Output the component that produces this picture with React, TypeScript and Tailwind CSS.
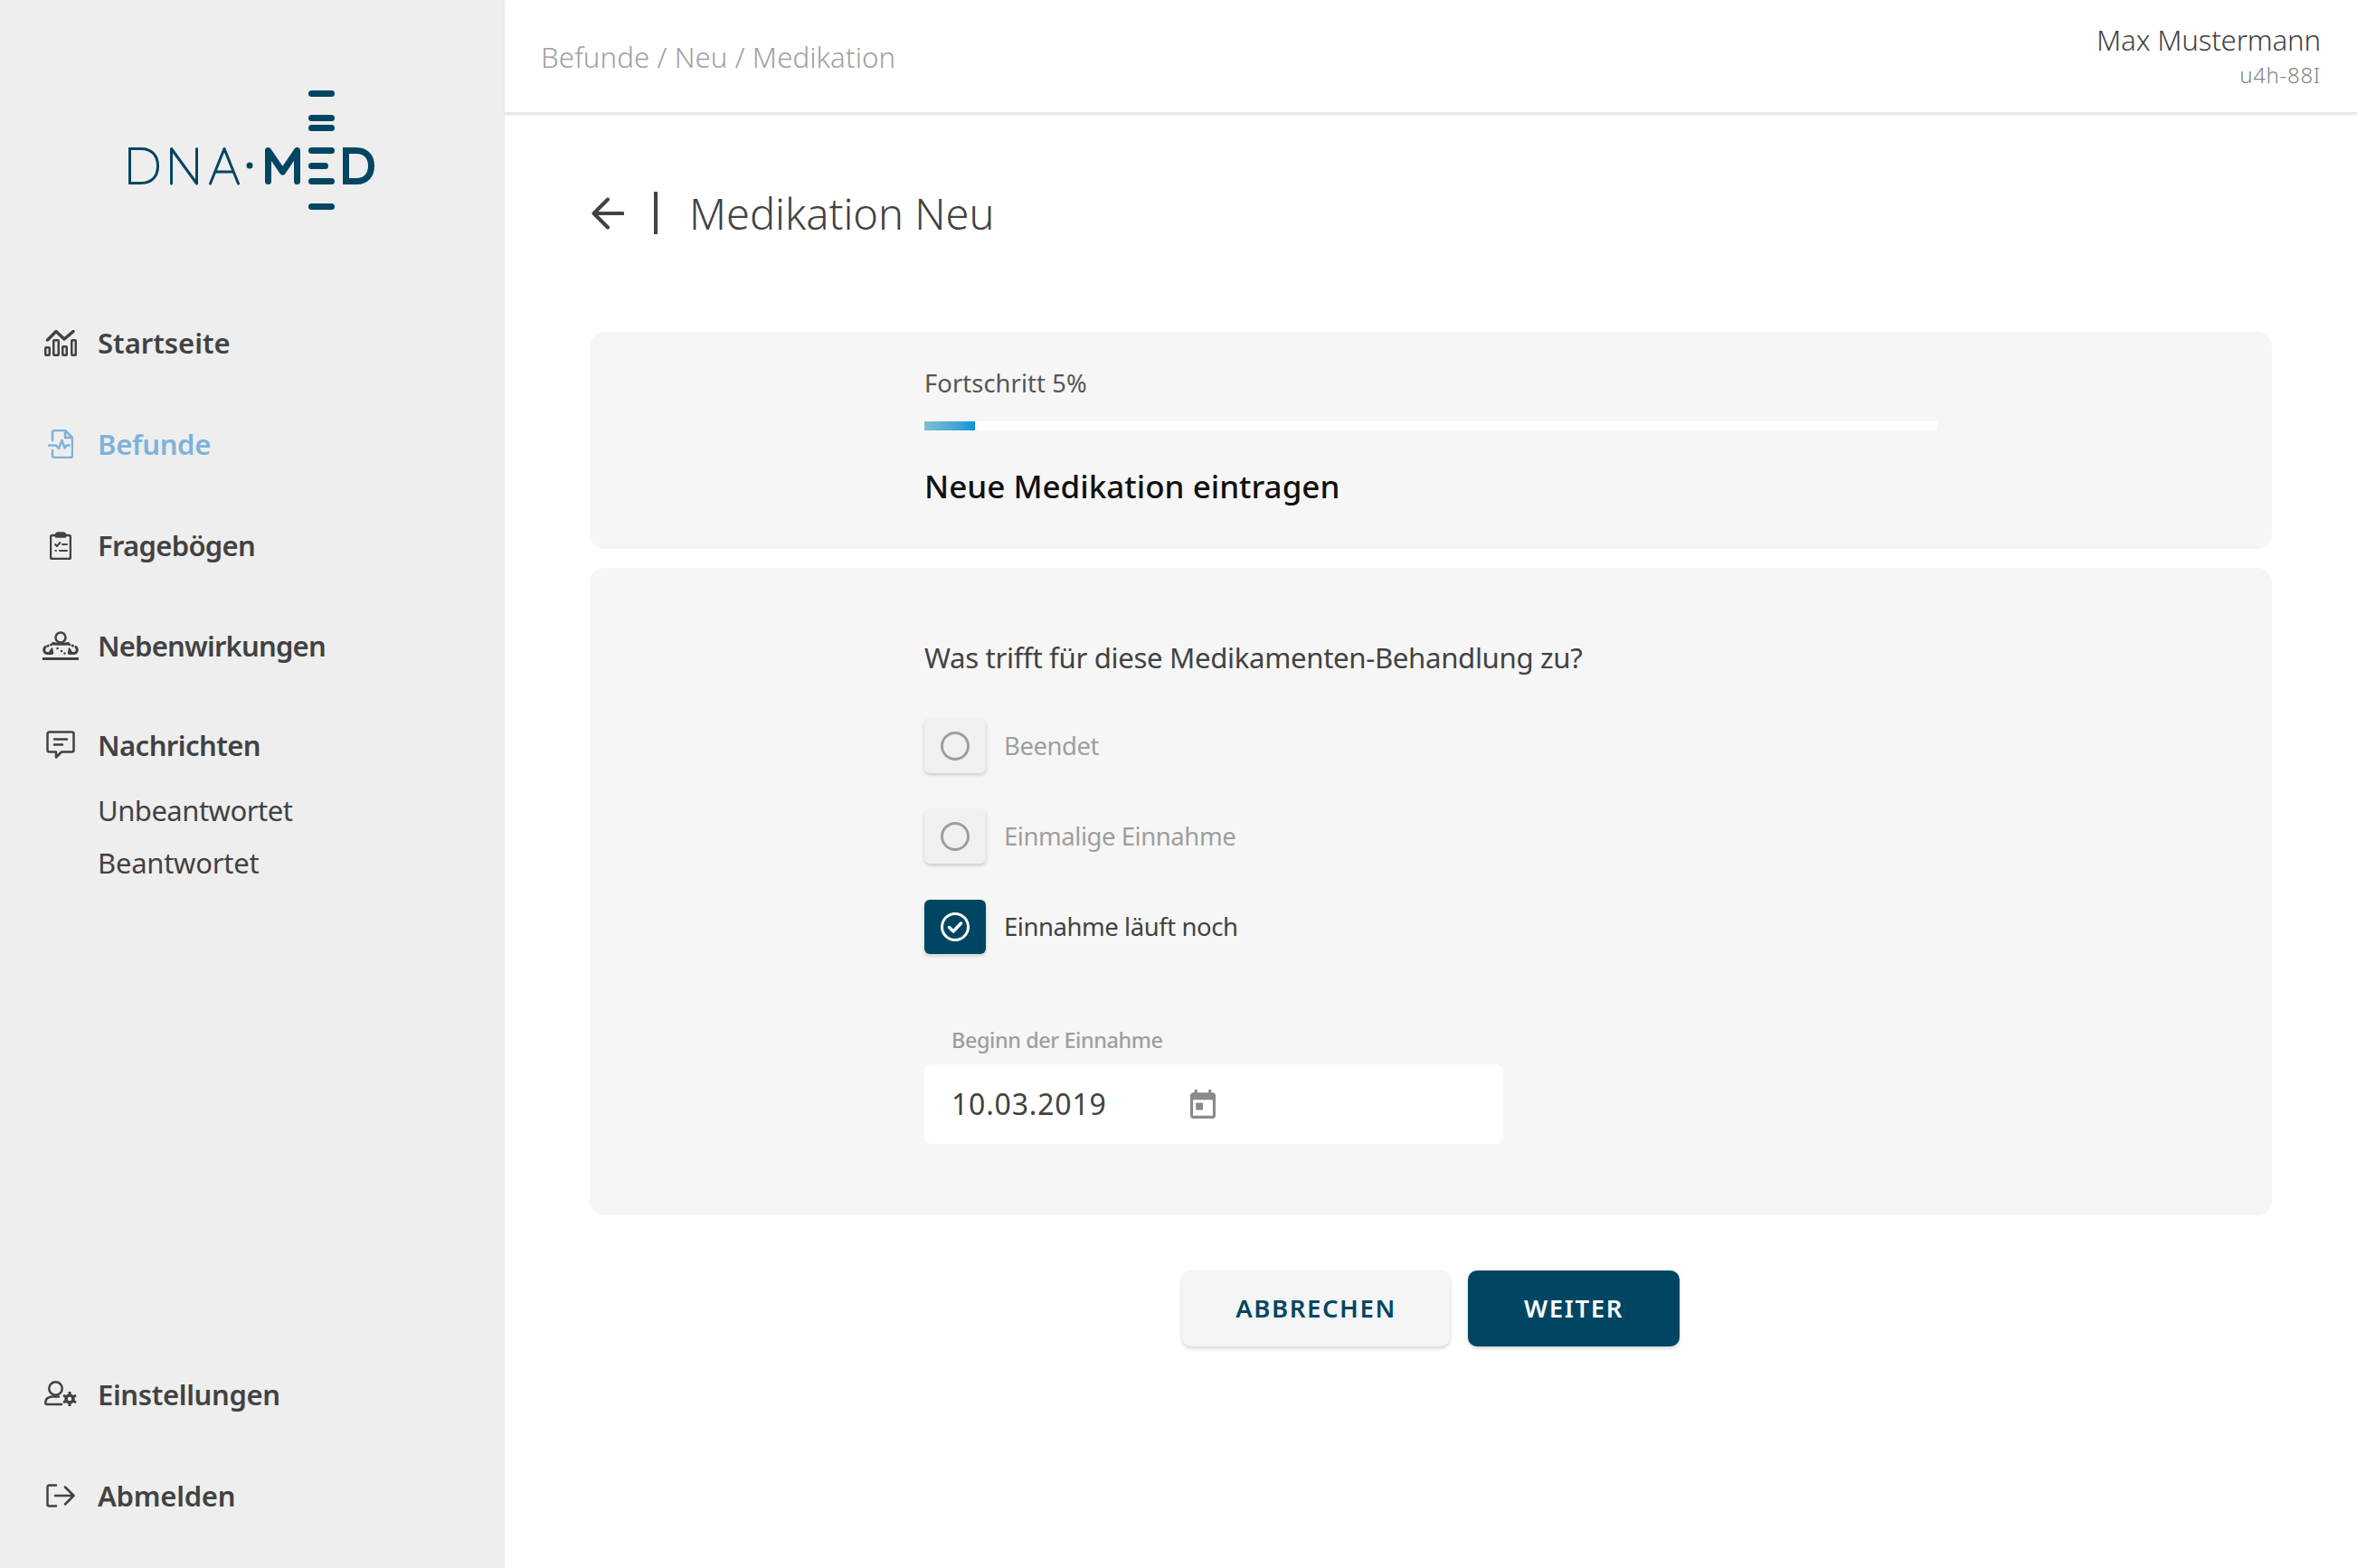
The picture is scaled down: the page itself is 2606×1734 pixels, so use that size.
import React from "react";

const C = "#004662";

function Logo() {
  return (
    <svg width="272" height="132" viewBox="0 0 272 132" fill="none" stroke={C} strokeLinecap="round" strokeLinejoin="round">
      <path strokeWidth="3" strokeLinecap="butt" strokeLinejoin="miter" d="M1.5 64.5H14C26 64.5 32.5 72 32.5 83.5S26 102.5 14 102.5H1.5Z" />
      <path strokeWidth="3" d="M47.5 103V64.5L75.5 103V64.5" />
      <path strokeWidth="3" d="M90.5 103L106 64.5L121.5 103M96 90H116" />
      <circle cx="134" cy="83" r="3.5" fill={C} stroke="none" />
      <path strokeWidth="7" d="M154.5 100.5V66.5L170.5 90L186.5 66.5V100.5" />
      <path strokeWidth="7" d="M202.5 3.5H224.5M202.5 30.5H224.5M202.5 41.5H224.5M202.5 66.5H224.5M202.5 83.5H217.5M202.5 100.5H224.5M202.5 128.5H224.5" />
      <path strokeWidth="7" strokeLinecap="butt" strokeLinejoin="miter" d="M240.5 66.5H252C263 66.5 268.5 74 268.5 83.5S263 100.5 252 100.5H240.5Z" />
    </svg>
  );
}

const IconHome = () => (
  <svg width="36" height="30" viewBox="0 0 36 30" fill="none" stroke="currentColor" strokeWidth="2.5" strokeLinecap="round" strokeLinejoin="round">
    <path strokeWidth="3.5" d="M3.5 12L13 2.5L22 11L32 2.5" />
    <rect x="1.25" y="20.25" width="4.5" height="8.5" rx="0.8" />
    <rect x="10.25" y="12.25" width="5.5" height="16.5" rx="0.8" />
    <rect x="20.25" y="19.25" width="4.5" height="9.5" rx="0.8" />
    <rect x="30.25" y="12.25" width="4.5" height="16.5" rx="0.8" />
  </svg>
);

const IconDoc = () => (
  <svg width="28" height="32" viewBox="0 0 28 32" fill="none" stroke="currentColor" strokeWidth="2.5" strokeLinecap="round" strokeLinejoin="round">
    <path d="M5 12V3a2 2 0 0 1 2-2h12l8 8v20a2 2 0 0 1-2 2H7a2 2 0 0 1-2-2v-6" />
    <path d="M19 2v7h7" />
    <path d="M1 17.5h8l3 3.5 3.5-9 3 8.5 2-3h3" />
  </svg>
);

const IconClip = () => (
  <svg width="24" height="32" viewBox="0 0 24 32" fill="none" stroke="currentColor" strokeWidth="2.5" strokeLinecap="round" strokeLinejoin="round">
    <path d="M7 5H3a2 2 0 0 0-2 1.8V29a2 2 0 0 0 2 2h18a2 2 0 0 0 2-2V6.8A2 2 0 0 0 21 5h-4" />
    <path d="M7 6.5V4.8A2.5 2.5 0 0 1 9.5 2.5h5A2.5 2.5 0 0 1 17 4.8v1.7z" fill="currentColor" />
    <path strokeWidth="2" d="M6 15l2 2 3.5-4M14 15h5M6.5 22h.5M11 22h8" />
  </svg>
);

const IconSide = () => (
  <svg width="40" height="32" viewBox="0 0 40 32" fill="none" stroke="currentColor" strokeWidth="2.5" strokeLinecap="round" strokeLinejoin="round">
    <circle cx="20" cy="7" r="5.5" />
    <path strokeWidth="3" d="M11.5 13.5C14 14.500 26 14.500 28.500 13.500" />
    <path strokeDasharray="1 3" d="M5.500 16.500L11 14.500M29 14.500L34.500 16.500" />
    <path strokeWidth="3" d="M3 17.500C.8 20 1.500 24 5 24.500H10M37 17.500C39.200 20 38.500 24 35 24.500H30" />
    <path d="M10.500 19L7 24.500L11.500 24.500zM29.500 19L33 24.500L28.500 24.500z" fill="currentColor" strokeWidth="1.500" />
    <path d="M16.500 19h.1M24.500 24.500h.1M21 22h.1" />
    <path strokeLinecap="butt" strokeWidth="3" d="M0 30.500H40" />
  </svg>
);

const IconChat = () => (
  <svg width="32" height="32" viewBox="0 0 32 32" fill="none" stroke="currentColor" strokeWidth="2.5" strokeLinecap="round" strokeLinejoin="round">
    <path d="M3.500 1.500h25a2 2 0 0 1 2 2v18a2 2 0 0 1-2 2H17l-6 6v-6H3.500a2 2 0 0 1-2-2v-18a2 2 0 0 1 2-2z" />
    <path d="M9 9.500h14M9 15.500h9" />
  </svg>
);

const IconUserGear = () => (
  <svg width="36" height="30" viewBox="0 0 36 30" fill="none" stroke="currentColor" strokeWidth="2.500" strokeLinecap="round" strokeLinejoin="round">
    <circle cx="12.500" cy="8.500" r="7.250" />
    <path d="M19 26H3c-1 0-1.750-.7-1.750-1.700 0-4 3-6.300 6.500-6.800H16" />
    <circle cx="28" cy="20" r="4" strokeWidth="3.500" />
    <path strokeWidth="3" strokeLinecap="butt" d="M28 12v3M28 25v3M21 16l2.600 1.500M32.400 22.500L35 24M21 24l2.600-1.500M32.400 17.500L35 16" />
  </svg>
);

const IconLogout = () => (
  <svg width="32" height="26" viewBox="0 0 32 26" fill="none" stroke="currentColor" strokeWidth="2.500" strokeLinecap="round" strokeLinejoin="round">
    <path d="M11 1.500H3.500a2 2 0 0 0-2 2v19a2 2 0 0 0 2 2H11" />
    <path d="M10 13H30M21 3.500L30.500 13L21 22.500" />
  </svg>
);

function NavItem({ icon, label, active, h, track }: { icon: React.ReactNode; label: string; active?: boolean; h: string; track: string }) {
  return (
    <a className={`flex items-center ${h} ${active ? "text-[#7db3da]" : "text-[#424242]"}`}>
      <span className="w-[108px] flex justify-center pl-[26px] shrink-0">{icon}</span>
      <span className={`text-[31px] leading-[44px] font-semibold ${track}`}>{label}</span>
    </a>
  );
}

function Option({ label, checked }: { label: string; checked?: boolean }) {
  return (
    <div className="flex items-center gap-[20px]">
      <div className={`w-[68px] h-[60px] rounded-[6px] flex items-center justify-center shadow-[0_2px_4px_rgba(0,0,0,0.18)] ${checked ? "bg-[#004662]" : "bg-[#f0f0f0]"}`}>
        {checked ? (
          <svg width="32" height="32" viewBox="0 0 32 32" fill="none" stroke="#fff" strokeWidth="3" strokeLinecap="round" strokeLinejoin="round">
            <circle cx="16" cy="16" r="14.500" />
            <path strokeWidth="3.500" d="M9.500 16.500l4.500 4.500 8.500-9" />
          </svg>
        ) : (
          <svg width="32" height="32" viewBox="0 0 32 32" fill="none" stroke="#9e9e9e" strokeWidth="3">
            <circle cx="16" cy="16" r="14.500" />
          </svg>
        )}
      </div>
      <span className={`text-[27.5px] leading-[40px] tracking-[-0.45px] ${checked ? "text-[#424242]" : "text-[#9e9e9e]"}`}>{label}</span>
    </div>
  );
}

export default function App() {
  return (
    <div className="flex w-full h-[1734px] bg-white overflow-hidden font-['Noto_Sans',sans-serif]">
      <aside className="w-[558px] shrink-0 bg-[#eeeeee] flex flex-col">
        <div className="pl-[142px] pt-[100px]">
          <Logo />
        </div>
        <nav className="mt-[91px] flex flex-col">
          <NavItem h="h-[112px]" track="tracking-[0px]" icon={<IconHome />} label="Startseite" />
          <NavItem h="h-[112px]" track="tracking-[-0.3px]" icon={<IconDoc />} label="Befunde" active />
          <NavItem h="h-[112px]" track="tracking-[-0.7px]" icon={<IconClip />} label="Fragebögen" />
          <NavItem h="h-[110px]" track="tracking-[-0.8px]" icon={<IconSide />} label="Nebenwirkungen" />
          <NavItem h="h-[110px]" track="tracking-[-0.55px]" icon={<IconChat />} label="Nachrichten" />
          <div className="pl-[108px] text-[31px] leading-[58px] text-[#424242] -mt-[12px]">
            <div className="tracking-[-0.5px]">Unbeantwortet</div>
            <div className="tracking-[-0.25px]">Beantwortet</div>
          </div>
        </nav>
        <div className="mt-auto pb-[24px] flex flex-col">
          <NavItem h="h-[112px]" track="tracking-[-0.35px]" icon={<IconUserGear />} label="Einstellungen" />
          <NavItem h="h-[112px]" track="tracking-[-0.25px]" icon={<IconLogout />} label="Abmelden" />
        </div>
      </aside>

      <div className="flex-1 flex flex-col min-w-0">
        <header className="h-[127px] shrink-0 flex items-center justify-between pl-[40px] pr-[40px] border-b-[3px] border-[#e8e8e8] shadow-[0_1px_3px_rgba(0,0,0,0.06)]">
          <div className="text-[31.2px] leading-[44px] pt-[2px] tracking-[0.1px] font-light text-[#a0a0a0]">Befunde / Neu / Medikation</div>
          <div className="text-right">
            <div className="text-[31.2px] leading-[42px] tracking-[-0.15px] font-light text-[#424242] -mt-[2px]">Max Mustermann</div>
            <div className="text-[24px] leading-[32px] tracking-[0.7px] font-light text-[#848484] mt-[2px]">u4h-88I</div>
          </div>
        </header>

        <main className="px-[94px] pt-[85px] flex flex-col">
          <div className="flex items-center h-[47px]">
            <svg width="36" height="36" viewBox="0 0 36 36" fill="none" stroke="#424242" strokeWidth="4" strokeLinecap="round" strokeLinejoin="round" className="ml-[2px]">
              <path d="M34.500 18H2.500M18 2.500L2.500 18L18 33.500" />
            </svg>
            <div className="w-[4px] h-[47px] bg-[#424242] ml-[33px]" />
            <h1 className="ml-[35px] text-[47px] leading-[56px] font-light text-[#424242]">Medikation Neu</h1>
          </div>

          <section className="mt-[108px] h-[240px] rounded-[16px] bg-[#f6f6f6] pl-[370px] pt-[37px]">
            <div className="text-[27.300px] leading-[40px] tracking-[0.1px] text-[#555555]">Fortschritt 5%</div>
            <div className="mt-[22px] w-[1120px] h-[10px] bg-white">
              <div className="h-full w-[56px] bg-gradient-to-r from-[#7cc0d4] to-[#0094d4]" />
            </div>
            <div className="mt-[40px] text-[35px] leading-[44px] font-medium text-[#111111]">Neue Medikation eintragen</div>
          </section>

          <section className="mt-[21px] h-[716px] rounded-[16px] bg-[#f6f6f6] pl-[370px] pt-[77px]">
            <div className="text-[31.2px] leading-[44px] tracking-[-0.35px] text-[#424242]">Was trifft für diese Medikamenten-Behandlung zu?</div>
            <div className="mt-[46px] flex flex-col gap-[40px]">
              <Option label="Beendet" />
              <Option label="Einmalige Einnahme" />
              <Option label="Einnahme läuft noch" checked />
            </div>
            <div className="mt-[80px] pl-[30px] text-[23.4px] leading-[30px] tracking-[-0.4px] font-medium text-[#9e9e9e]">Beginn der Einnahme</div>
            <div className="mt-[12px] w-[640px] h-[88px] rounded-[8px] bg-white flex items-center pl-[30px]">
              <span className="text-[32px] leading-[44px] tracking-[0.8px] text-[#424242] w-[264px]">10.03.2019</span>
              <svg width="28" height="32" viewBox="3 1 18 20" preserveAspectRatio="none" fill="#8a8a8a">
                <path d="M19 3h-1V1h-2v2H8V1H6v2H5c-1.110 0-1.990.9-1.990 2L3 19c0 1.100.89 2 2 2h14c1.100 0 2-.9 2-2V5c0-1.100-.9-2-2-2zm0 16H5V8h14v11zM7 10h5v5H7z" />
              </svg>
            </div>
          </section>

          <div className="mt-[61px] flex justify-center gap-[20px]">
            <button className="w-[296px] h-[84px] rounded-[10px] bg-[#f5f5f5] text-[#004662] text-[27.5px] pb-[1px] font-semibold tracking-[1.6px] shadow-[0_2px_4px_rgba(0,0,0,0.18)]">ABBRECHEN</button>
            <button className="w-[234px] h-[84px] rounded-[10px] bg-[#004662] text-white text-[27.5px] pb-[1px] font-semibold tracking-[1.6px] shadow-[0_2px_4px_rgba(0,0,0,0.18)]">WEITER</button>
          </div>
        </main>
      </div>
    </div>
  );
}
